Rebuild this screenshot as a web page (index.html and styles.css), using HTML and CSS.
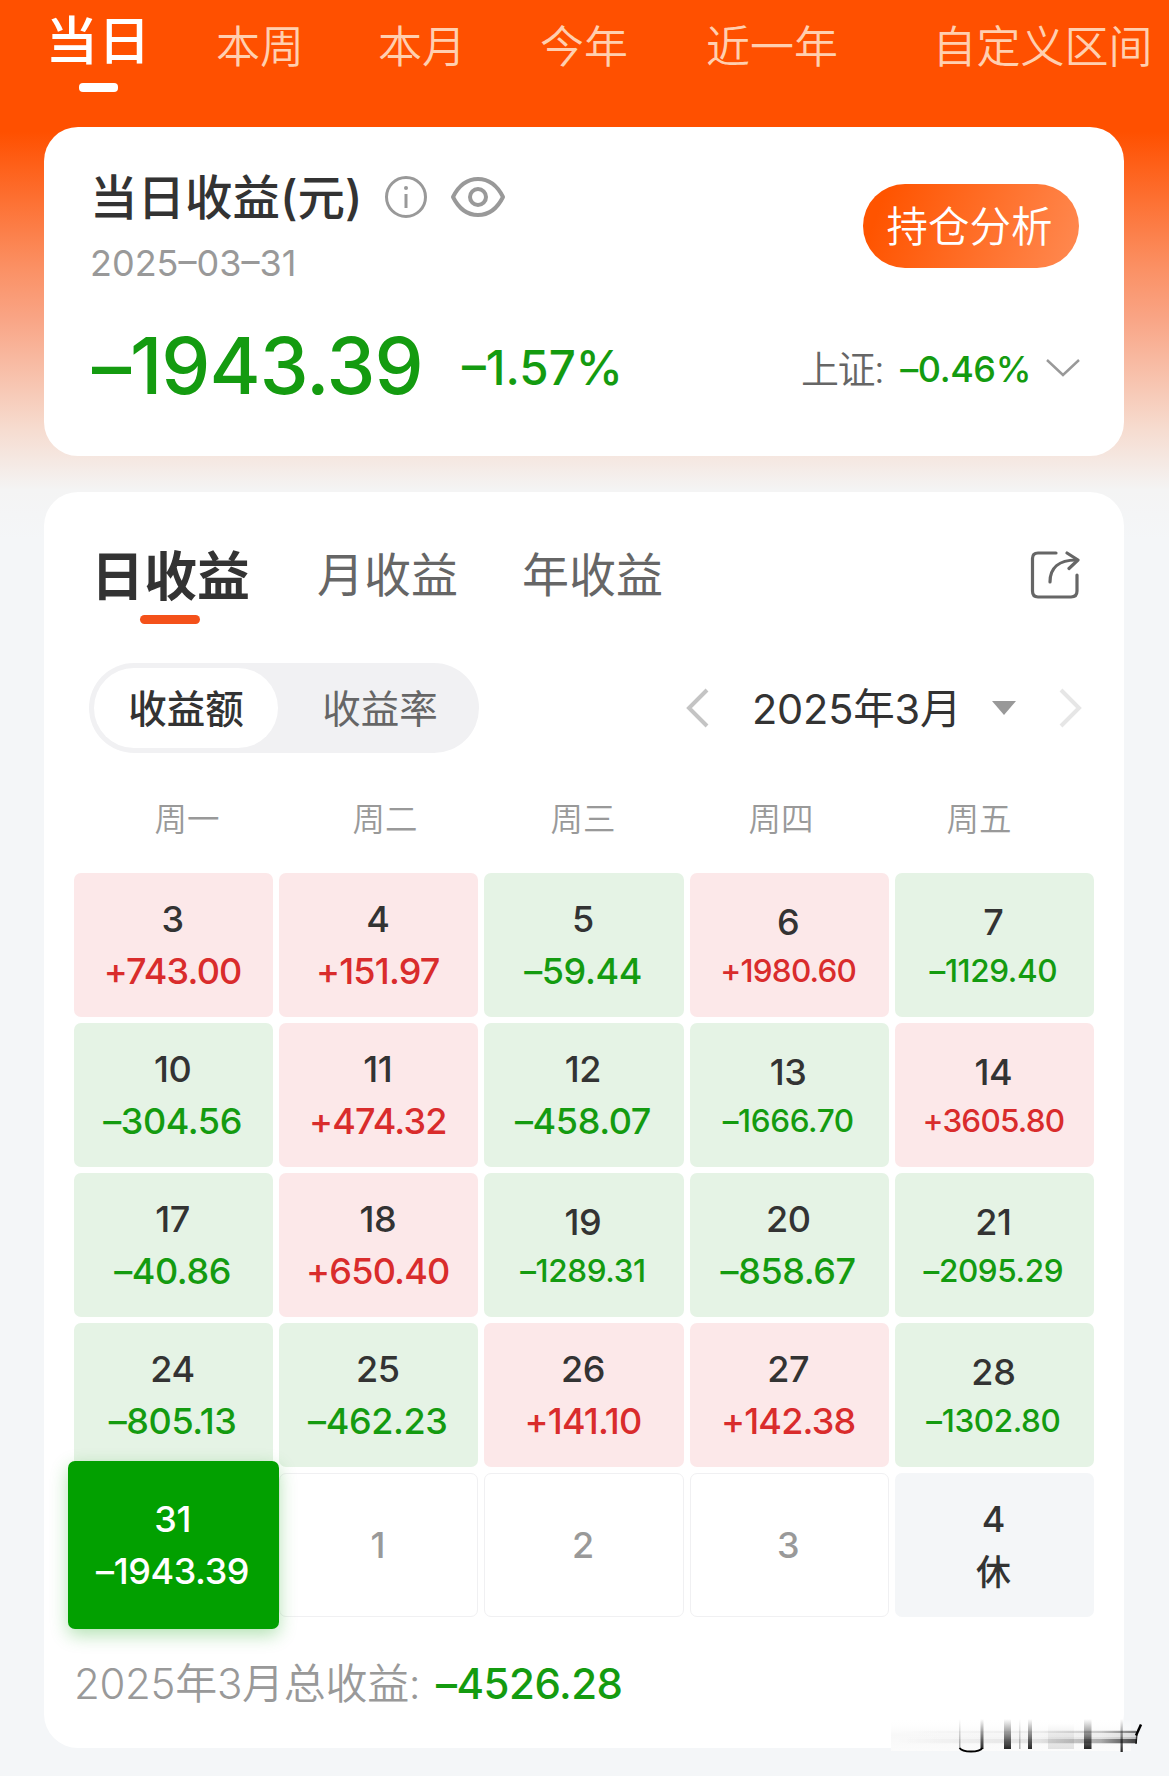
FILE: index.html
```html
<!DOCTYPE html>
<html lang="zh-CN">
<head>
    <meta charset="UTF-8">
    <meta name="viewport" content="width=device-width, initial-scale=1.0">
    <title>当日收益</title>
    <link rel="stylesheet" href="styles.css">
</head>
<body>
    <nav class="range-tabs">
        <a class="range active">当日</a>
        <a class="range">本周</a>
        <a class="range">本月</a>
        <a class="range">今年</a>
        <a class="range wide">近一年</a>
        <a class="range custom">自定义区间</a>
    </nav>

    <section class="card summary">
        <div class="summary-top">
            <div>
                <div class="title-row">
                    <h1>当日收益(元)</h1>
                    <svg class="icon-info" width="44" height="44" viewBox="0 0 44 44" fill="none" stroke="#999" stroke-width="3">
                        <circle cx="22" cy="22" r="19.5"/>
                        <path d="M22 19v14"/>
                        <circle cx="22" cy="13" r="2" fill="#999" stroke="none"/>
                    </svg>
                    <svg class="icon-eye" width="56" height="44" viewBox="0 0 56 44" fill="none" stroke="#999" stroke-width="4">
                        <path d="M3 22C9 10 18 4 28 4s19 6 25 18C47 34 38 40 28 40S9 34 3 22z" stroke-linejoin="round"/>
                        <circle cx="28" cy="22" r="8"/>
                    </svg>
                </div>
                <div class="date">2025–03–31</div>
            </div>
            <button class="analysis" type="button">持仓分析</button>
        </div>
        <div class="summary-bottom">
            <span class="profit">–1943.39</span>
            <span class="percent">–1.57%</span>
            <span class="index-name">上证:</span>
            <span class="index-value">–0.46%</span>
            <svg class="icon-down" width="34" height="20" viewBox="0 0 34 20" fill="none" stroke="#999" stroke-width="2.4">
                <path d="M1 2l16 15L33 2"/>
            </svg>
        </div>
    </section>

    <section class="card detail">
        <div class="profit-tabs">
            <a class="tab active">日收益</a>
            <a class="tab">月收益</a>
            <a class="tab">年收益</a>
            <svg class="icon-share" width="50" height="50" viewBox="0 0 50 50" fill="none" stroke="#666" stroke-width="3.2" stroke-linecap="round" stroke-linejoin="round">
                <path d="M26 3H8Q2.500 3 2.500 8.500V41Q2.500 47 8 47H41Q47 47 47 41V25"/>
                <path d="M20 32C20 18 29 10 46 10"/>
                <path d="M37 3L48 10L39 18.500"/>
            </svg>
        </div>

        <div class="controls">
            <div class="segment">
                <span class="seg active">收益额</span>
                <span class="seg">收益率</span>
            </div>
            <div class="month-picker">
                <svg width="24" height="40" viewBox="0 0 24 40" fill="none" stroke="#c4c4c4" stroke-width="4"><path d="M21 2L3 20l18 18"/></svg>
                <span class="month">2025年3月</span>
                <svg class="caret" width="24" height="14" viewBox="0 0 24 14"><path d="M0 0h24L12 14z" fill="#999"/></svg>
                <svg width="24" height="40" viewBox="0 0 24 40" fill="none" stroke="#e6e6e6" stroke-width="4"><path d="M3 2l18 18L3 38"/></svg>
            </div>
        </div>

        <div class="weekdays">
            <span>周一</span><span>周二</span><span>周三</span><span>周四</span><span>周五</span>
        </div>

        <div class="calendar">
            <div class="day up"><b>3</b><span>+743.00</span></div>
            <div class="day up"><b>4</b><span>+151.97</span></div>
            <div class="day down"><b>5</b><span>–59.44</span></div>
            <div class="day up long"><b>6</b><span>+1980.60</span></div>
            <div class="day down long"><b>7</b><span>–1129.40</span></div>

            <div class="day down"><b>10</b><span>–304.56</span></div>
            <div class="day up"><b>11</b><span>+474.32</span></div>
            <div class="day down"><b>12</b><span>–458.07</span></div>
            <div class="day down long"><b>13</b><span>–1666.70</span></div>
            <div class="day up long"><b>14</b><span>+3605.80</span></div>

            <div class="day down"><b>17</b><span>–40.86</span></div>
            <div class="day up"><b>18</b><span>+650.40</span></div>
            <div class="day down long"><b>19</b><span>–1289.31</span></div>
            <div class="day down"><b>20</b><span>–858.67</span></div>
            <div class="day down long"><b>21</b><span>–2095.29</span></div>

            <div class="day down"><b>24</b><span>–805.13</span></div>
            <div class="day down"><b>25</b><span>–462.23</span></div>
            <div class="day up"><b>26</b><span>+141.10</span></div>
            <div class="day up"><b>27</b><span>+142.38</span></div>
            <div class="day down long"><b>28</b><span>–1302.80</span></div>

            <div class="day selected"><b>31</b><span>–1943.39</span></div>
            <div class="day future"><b>1</b></div>
            <div class="day future"><b>2</b></div>
            <div class="day future"><b>3</b></div>
            <div class="day rest"><b>4</b><span>休</span></div>
        </div>

        <div class="total">
            <span class="total-label">2025年3月总收益:</span>
            <span class="total-value">–4526.28</span>
        </div>
    </section>

    <!-- streaked mark in the corner -->
    <svg class="mark" width="269" height="44" viewBox="0 0 269 44">
        <defs>
            <linearGradient id="fadeDown" x1="0" y1="0" x2="0" y2="1">
                <stop offset="0" stop-color="#000" stop-opacity="0"/>
                <stop offset="1" stop-color="#000" stop-opacity=".85"/>
            </linearGradient>
            <linearGradient id="fadeRight" x1="0" y1="0" x2="1" y2="0">
                <stop offset="0" stop-color="#000" stop-opacity="0"/>
                <stop offset=".6" stop-color="#000" stop-opacity=".1"/>
                <stop offset=".85" stop-color="#000" stop-opacity=".35"/>
                <stop offset="1" stop-color="#000" stop-opacity=".95"/>
            </linearGradient>
            <linearGradient id="haze" x1="0" y1="0" x2="0" y2="1">
                <stop offset="0" stop-color="#fff" stop-opacity="0"/>
                <stop offset=".5" stop-color="#f8f8f8"/>
                <stop offset="1" stop-color="#fbfbfb"/>
            </linearGradient>
        </defs>
        <rect x="6" y="4" width="240" height="32" fill="url(#haze)"/>
        <rect x="163" y="8" width="26" height="26" fill="url(#fadeDown)" opacity=".12"/>
        <rect x="10" y="16" width="243" height="2" fill="url(#fadeRight)" opacity=".5"/>
        <rect x="10" y="15" width="241" height="7" fill="url(#fadeRight)" opacity=".12"/>
        <rect x="10" y="22" width="242" height="7" fill="url(#fadeRight)" opacity=".25"/>
        <rect x="10" y="24" width="242" height="4" fill="url(#fadeRight)" opacity=".7"/>
        <rect x="74" y="4" width="1.500" height="30" fill="url(#fadeDown)" opacity=".4"/>
        <rect x="95.500" y="4" width="3" height="30" fill="url(#fadeDown)"/>
        <path d="M74.500 33Q77 36.500 86 36.500T97.500 33" fill="none" stroke="#000" stroke-width="1.800"/>
        <rect x="119" y="4" width="7" height="30" fill="url(#fadeDown)"/>
        <rect x="134" y="4" width="1.500" height="30" fill="url(#fadeDown)" opacity=".35"/>
        <rect x="143" y="4" width="4" height="30" fill="url(#fadeDown)"/>
        <rect x="199" y="4" width="7.500" height="30" fill="url(#fadeDown)"/>
        <rect x="235.500" y="4" width="2.300" height="33" fill="url(#fadeDown)"/>
        <path d="M256 9.500L251 20.500" stroke="#000" stroke-width="2.500"/>
        <path d="M252 18L251 29" stroke="#000" stroke-width="1.500" opacity=".7"/>
    </svg>
</body>
</html>
```
FILE: styles.css
```css
* {
    box-sizing: border-box;
}
body {
    margin: 0;
    width: 1169px;
    height: 1776px;
    overflow: hidden;
    position: relative;
    font-family: Inter, "Noto Sans CJK SC", sans-serif;
    color: #333;
    background: #f4f6f8 linear-gradient(to bottom, #ff5000 0, #ff5000 132px, #fb8f62 265px, #f9a586 320px, #f6dcd0 430px, #f4f4f4 490px, #f4f6f8 540px) no-repeat;
}
h1, b {
    margin: 0;
    font-weight: 500;
}
svg {
    display: block;
    flex: none;
}

/* top range tabs */
.range-tabs {
    display: flex;
    height: 127px;
    padding-left: 17px;
    white-space: nowrap;
}
.range {
    width: 162px;
    padding-top: 17px;
    font-size: 44px;
    font-weight: 350;
    line-height: 60px;
    text-align: center;
    color: #ffcfb0;
}
.range.active {
    padding-top: 11px;
    font-size: 52.500px;
    font-weight: 500;
    color: #fff;
}
.range.active::after {
    content: "";
    display: block;
    width: 39px;
    height: 9px;
    margin: 12px auto 0;
    border-radius: 4px;
    background: #fff;
}
.range.wide {
    width: 214px;
}
.range.custom {
    width: 221px;
    margin-left: 53px;
}

.card {
    width: 1080px;
    margin: 0 0 36px 44px;
    border-radius: 34px;
    background: #fff;
}

/* summary */
.summary {
    height: 329px;
    padding: 40px 44px 0 46px;
}
.summary-top {
    display: flex;
    justify-content: space-between;
}
.title-row {
    display: flex;
    align-items: center;
    height: 60px;
}
h1 {
    width: 294px;
    padding-top: 2px;
    font-size: 47.500px;
    line-height: 60px;
    white-space: nowrap;
}
.icon-eye {
    margin-left: 22px;
}
.date {
    margin-top: 14px;
    font-size: 36px;
    line-height: 44px;
    color: #999;
}
.analysis {
    width: 216px;
    height: 84px;
    margin: 17px 1px 0 0;
    padding: 2px 3px 0 0;
    border: 0;
    border-radius: 42px;
    font: 350 41.500px/82px Inter, "Noto Sans CJK SC", sans-serif;
    color: #fff;
    background: linear-gradient(110deg, #ff5400 10%, #ff8a52);
}
.summary-bottom {
    display: flex;
    align-items: center;
    margin-top: 27px;
    padding-left: 2px;
    white-space: nowrap;
    line-height: 100px;
    color: #149b10;
    font-weight: 500;
}
.profit {
    width: 370px;
    font-size: 78px;
    letter-spacing: -1px;
}
.percent {
    padding-top: 5px;
    font-size: 47.500px;
}
.index-name {
    margin-left: auto;
    padding-top: 7px;
    font-size: 38px;
    font-weight: 350;
    letter-spacing: -1.500px;
    color: #666;
}
.index-value {
    margin: 0 15px 0 17px;
    padding-top: 6px;
    font-size: 36px;
    letter-spacing: -0.4px;
}
.icon-down {
    margin-top: 4px;
}

/* daily detail */
.detail {
    height: 1256px;
    padding: 44px 30px 0;
}
.profit-tabs {
    display: flex;
    padding: 0 14px 0 17px;
    height: 127px;
    white-space: nowrap;
}
.tab {
    width: 162px;
    margin-right: 64px;
    padding-top: 7px;
    font-size: 47px;
    line-height: 64px;
    color: #666;
}
.tab + .tab {
    width: 141px;
}
.tab.active {
    width: 162px;
    padding-top: 9px;
    font-size: 53px;
    font-weight: 700;
    color: #333;
}
.tab.active::after {
    content: "";
    display: block;
    width: 60px;
    height: 9px;
    margin: 6px 0 0 49px;
    border-radius: 5px;
    background: #f4511a;
}
.icon-share {
    margin: 14px 0 0 auto;
}
.controls {
    display: flex;
    justify-content: space-between;
    align-items: center;
    padding: 0 12px 0 15px;
}
.segment {
    display: flex;
    width: 390px;
    height: 90px;
    padding: 5px;
    border-radius: 45px;
    background: #f1f1f3;
    font-size: 38.500px;
    line-height: 82px;
    text-align: center;
    color: #666;
}
.seg {
    flex: 1;
    padding-left: 8px;
}
.seg.active {
    flex: none;
    width: 184px;
    height: 80px;
    padding: 0;
    border-radius: 40px;
    background: #fff;
    font-weight: 500;
    color: #333;
}
.month-picker {
    display: flex;
    align-items: center;
}
.month {
    margin: -5px 0 0 42px;
    width: 206px;
    font-size: 41.500px;
    letter-spacing: -0.2px;
    white-space: nowrap;
}
.caret {
    margin: 0 42px 0 34px;
}
.weekdays {
    display: grid;
    grid-template-columns: repeat(5, 198px);
    margin: 47px 0 33px 14px;
    font-size: 32.500px;
    font-weight: 350;
    line-height: 40px;
    text-align: center;
    color: #999;
}
.calendar {
    display: grid;
    grid-template-columns: repeat(5, 1fr);
    grid-auto-rows: 144px;
    gap: 6px;
}
.day {
    display: flex;
    flex-direction: column;
    justify-content: center;
    padding-right: 2px;
    border-radius: 7px;
    text-align: center;
    font-size: 36px;
    font-weight: 500;
    line-height: 52px;
    letter-spacing: -0.4px;
}
.day.up {
    background: #fce8e9;
}
.day.down {
    background: #e5f3e5;
}
.up span {
    color: #d92c2c;
    letter-spacing: -0.8px;
}
.down span {
    color: #149b10;
}
.long b {
    margin-top: -1px;
}
.long span {
    padding-top: 1px;
    font-size: 31.500px;
    line-height: 44px;
}
.day.selected {
    z-index: 1;
    margin: -12px -6px;
    background: #02a000;
    color: #fff;
    box-shadow: 0 6px 18px rgba(2, 160, 0, 0.3);
}
.day.future {
    border: 1px solid #f0f0f2;
    color: #999;
}
.day.rest {
    background: #f4f6f8;
}
.rest span {
    font-size: 35px;
    padding-top: 1px;
    margin-bottom: -1px;
}
.total {
    display: flex;
    align-items: baseline;
    margin-top: 37px;
    font-size: 42px;
    line-height: 60px;
    white-space: nowrap;
}
.total-label {
    width: 362px;
    font-weight: 350;
    letter-spacing: -0.3px;
    color: #999;
}
.total-value {
    font-weight: 500;
    letter-spacing: -0.5px;
    color: #149b10;
}
.mark {
    position: absolute;
    left: 885px;
    top: 1715px;
}
```
